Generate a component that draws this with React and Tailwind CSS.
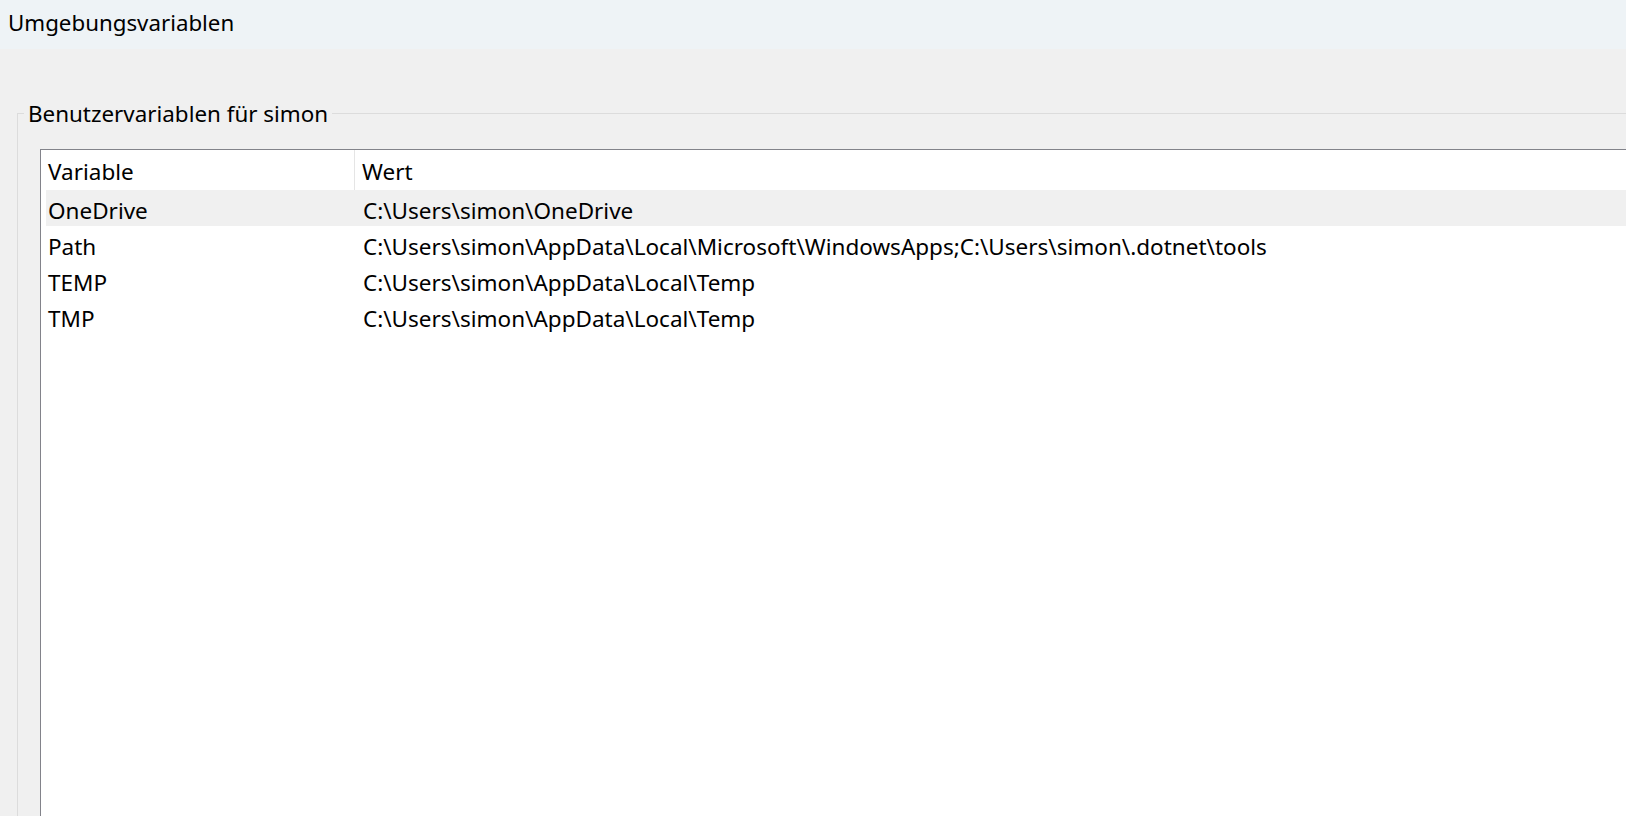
const ROWS = [
  { name: 'OneDrive', value: 'C:\\Users\\simon\\OneDrive', selected: true },
  { name: 'Path', value: 'C:\\Users\\simon\\AppData\\Local\\Microsoft\\WindowsApps;C:\\Users\\simon\\.dotnet\\tools' },
  { name: 'TEMP', value: 'C:\\Users\\simon\\AppData\\Local\\Temp' },
  { name: 'TMP', value: 'C:\\Users\\simon\\AppData\\Local\\Temp' },
]

export default function App() {
  return (
    <div className="w-full h-[816px] overflow-hidden bg-[#f0f0f0] text-black font-['Noto_Sans',sans-serif]">
      <div className="h-[49px] bg-[#eef3f6] pl-[8px] pb-[4px] flex items-center text-[22.3px]">
        Umgebungsvariablen
      </div>

      <div className="pt-[64px] pl-[17px]">
        <div className="relative border-l border-t border-[#dcdcdc] h-[800px] pt-[35px] pl-[22px]">
          <span className="absolute -top-[15px] left-[6px] px-[4px] bg-[#f0f0f0] text-[22.4px] leading-[30px]">
            Benutzervariablen für simon
          </span>

          <div className="bg-white border-l border-t border-[#82838a] h-[700px] text-[22.5px]">
            <div className="flex h-[40px] items-center">
              <div className="w-[314px] h-full flex items-center pt-[4px] pl-[7px] border-r border-[#e5e5e5]">Variable</div>
              <div className="pl-[7px] pt-[4px]">Wert</div>
            </div>
            <div className="pl-[5px]">
              {ROWS.map((r) => (
                <div key={r.name} className={`flex h-[36px] items-center pt-[5px] ${r.selected ? 'bg-[#f0f0f0]' : ''}`}>
                  <div className="w-[309px] pl-[2px] whitespace-nowrap">{r.name}</div>
                  <div className="pl-[8px] whitespace-nowrap">{r.value}</div>
                </div>
              ))}
            </div>
          </div>
        </div>
      </div>
    </div>
  )
}
